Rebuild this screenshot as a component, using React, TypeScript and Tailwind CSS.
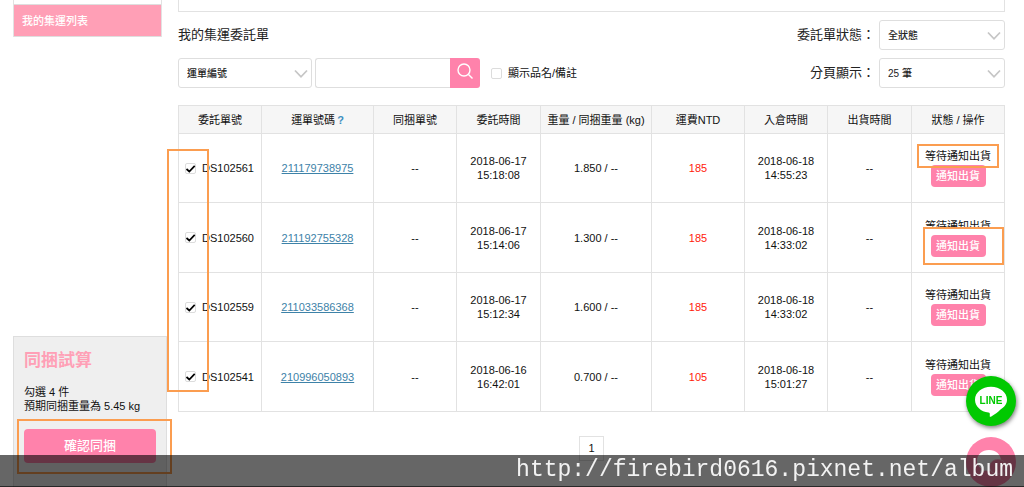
import { useState } from 'react';
import type { ReactNode } from 'react';

interface Order {
  id: string;
  tracking: string;
  created: [string, string];
  weight: string;
  fee: number;
  arrived: [string, string];
  mark?: 'status' | 'button';
}

const ORDERS: Order[] = [
  { id: 'DS102561', tracking: '211179738975', created: ['2018-06-17', '15:18:08'], weight: '1.850', fee: 185, arrived: ['2018-06-18', '14:55:23'], mark: 'status' },
  { id: 'DS102560', tracking: '211192755328', created: ['2018-06-17', '15:14:06'], weight: '1.300', fee: 185, arrived: ['2018-06-18', '14:33:02'], mark: 'button' },
  { id: 'DS102559', tracking: '211033586368', created: ['2018-06-17', '15:12:34'], weight: '1.600', fee: 185, arrived: ['2018-06-18', '14:33:02'] },
  { id: 'DS102541', tracking: '210996050893', created: ['2018-06-16', '16:42:01'], weight: '0.700', fee: 105, arrived: ['2018-06-18', '15:01:27'] },
];

const COLUMNS = [
  { label: '委託單號', width: 'w-[83px]' },
  { label: '運單號碼', width: 'w-[112px]', help: true },
  { label: '同捆單號', width: 'w-[83px]' },
  { label: '委託時間', width: 'w-[84px]' },
  { label: '重量 / 同捆重量 (kg)', width: 'w-[111px]' },
  { label: '運費NTD', width: 'w-[93px]' },
  { label: '入倉時間', width: 'w-[83px]' },
  { label: '出貨時間', width: 'w-[84px]' },
  { label: '狀態 / 操作', width: 'w-[93px]' },
];

function Select({ id, label, width, children }: { id: string; label?: string; width: string; children: ReactNode }) {
  return (
    <div className={`relative ${width}`}>
      <select
        id={id}
        aria-label={label}
        className="block h-[30px] w-full appearance-none rounded-[3px] border border-[#dedede] bg-white pl-2 pr-6 text-[10px] font-medium text-[#222]"
      >
        {children}
      </select>
      <svg className="pointer-events-none absolute right-1 top-2.5 h-3 w-3.5" viewBox="0 0 14 12" fill="none" stroke="#c6c6c6" strokeWidth="1.8">
        <path d="M1 2.500 7 8.800l6-6.300" />
      </svg>
    </div>
  );
}

function CheckBox({ id, label, defaultChecked }: { id: string; label?: string; defaultChecked?: boolean }) {
  const [checked, setChecked] = useState(!!defaultChecked);

  return (
    <span className="relative block h-[11px] w-[11px] shrink-0">
      <input
        id={id}
        aria-label={label}
        type="checkbox"
        checked={checked}
        onChange={(e) => setChecked(e.target.checked)}
        className="block h-[11px] w-[11px] appearance-none rounded-[2px] border border-[#dcdcdc] bg-white"
      />
      {checked && (
        <svg className="pointer-events-none absolute inset-0" viewBox="0 0 11 11" fill="none" stroke="#000" strokeWidth="1.7">
          <path d="M1.500 6 4.300 8.500 9.700 2.800" />
        </svg>
      )}
    </span>
  );
}

function TwoLines({ value }: { value: [string, string] }) {
  return (
    <>
      {value[0]}
      <br />
      {value[1]}
    </>
  );
}

function OrderRow({ order }: { order: Order }) {
  const cell = 'border border-[#e2e2e2] p-0';

  return (
    <tr className="h-[69px] even:h-[70px]">
      <td className={cell}>
        <label className="flex items-center gap-1.5 pl-1.5">
          <CheckBox id={order.id} defaultChecked />
          {order.id}
        </label>
      </td>
      <td className={cell}>
        <a href="#tracking" className="text-[#3d82a8] underline">{order.tracking}</a>
      </td>
      <td className={cell}>--</td>
      <td className={cell}><TwoLines value={order.created} /></td>
      <td className={cell}>{order.weight} / --</td>
      <td className={`${cell} text-[#ff1a0a]`}>{order.fee}</td>
      <td className={cell}><TwoLines value={order.arrived} /></td>
      <td className={cell}>--</td>
      <td className={cell}>
        <div className="flex flex-col items-center gap-0.5">
          <span className="relative">
            等待通知出貨
            {order.mark === 'status' && (
              <span className="absolute -inset-x-2 -inset-y-[5px] z-10 border-2 border-[#fb9d50]" />
            )}
          </span>
          <div className="relative">
            {order.mark === 'button' && (
              <span className="absolute -bottom-2 -left-2 -right-[18px] -top-2 border-2 border-[#fb9d50] bg-white" />
            )}
            <button className="relative block h-[22px] w-[55px] rounded-[4px] bg-[#ff82ab] text-[11px] font-medium text-white">通知出貨</button>
          </div>
        </div>
      </td>
    </tr>
  );
}

function Sidebar() {
  return (
    <aside className="flex w-[154px] shrink-0 flex-col justify-between">
      <nav className="mr-[5px] border-x border-[#e2e2e2] pt-1">
        <a href="#list" className="block h-[33px] border-y border-[#dedede] bg-[#ff9fb6] pl-2 text-[11px] font-medium leading-8 text-white">
          我的集運列表
        </a>
      </nav>

      <section className="h-[151px] border border-b-0 border-[#dedede] bg-[#efefef] px-2.5 pt-3">
        <h2 className="text-[17px] font-bold leading-6 text-[#ff9fb6]">同捆試算</h2>
        <p className="mt-3 text-[11px] leading-[14px]">
          勾選 4 件
          <br />
          預期同捆重量為 5.45 kg
        </p>
        <div className="relative mt-4">
          <button className="block h-[34px] w-full rounded-[4px] bg-[#ff82ab] text-[13px] font-medium text-white">確認同捆</button>
          <span className="pointer-events-none absolute -bottom-[11px] -left-[7px] -right-4 -top-2.5 border-2 border-[#fb9d50]" />
        </div>
      </section>
    </aside>
  );
}

function FloatingButtons() {
  return (
    <div className="fixed bottom-0 right-2 z-20 flex flex-col gap-[11px]">
      <button aria-label="LINE" className="h-[50px] w-[50px] rounded-full bg-[#00c900] shadow-[1px_2px_4px_rgba(0,0,0,0.5)]">
        <svg viewBox="0 0 50 50">
          <path fill="#fff" d="M25 10.800c-9 0-16 5.700-16 12.900 0 6.600 5.900 12 13.500 12.800 1.300.200 1.500 1 1.300 2.700-.2 1.500.200 2 1.500 1.200 3.700-2.200 6.500-4.400 9.200-7 3.900-2.200 6.500-5.600 6.500-9.700 0-7.200-7-12.900-16-12.900z" />
          <text x="25" y="28" textAnchor="middle" fill="#00c900" className="text-[10px] font-bold">LINE</text>
        </svg>
      </button>
      <button aria-label="線上客服" className="h-[50px] w-[50px] rounded-full bg-[#ff82ab]">
        <svg viewBox="0 0 50 50">
          <path fill="#fff" d="M23 13c-7 0-12 4.700-12 10.500 0 3.300 1.600 6.200 4.200 8.100L14 36l5.200-2.500c1.200.300 2.500.500 3.800.500 7 0 12-4.700 12-10.500S30 13 23 13z" />
          <path fill="#ff82ab" stroke="#ffb3cc" strokeWidth="1" d="M32 22.500c-4.800 0-8.300 3.200-8.300 7.300s3.500 7.300 8.300 7.300c.9 0 1.800-.1 2.600-.4l3.600 1.800-.9-3.300c1.800-1.400 2.900-3.200 2.900-5.400 0-4.100-3.500-7.300-8.200-7.300z" />
        </svg>
      </button>
    </div>
  );
}

export default function App() {
  return (
    <div className="relative flex min-h-screen gap-[11px] bg-white pl-[13px] pr-[19px] font-['Liberation_Sans','Noto_Sans_CJK_TC',sans-serif] text-[#111]">
      <Sidebar />

      <main className="min-w-0 flex-1">
        <div className="h-3 border border-t-0 border-[#e2e2e2]" />

        <div className="mt-2 flex items-center justify-between">
          <h1 className="text-[13px] text-[#222]">我的集運委託單</h1>
          <div className="flex items-center gap-1">
            <label htmlFor="status" className="text-[13px] text-[#222]">委託單狀態：</label>
            <Select id="status" width="w-[126px]">
              <option>全狀態</option>
            </Select>
          </div>
        </div>

        <div className="mt-2 flex items-center justify-between">
          <div className="flex items-center">
            <Select id="field" label="搜尋欄位" width="w-[134px]">
              <option>運單編號</option>
            </Select>
            <input aria-label="關鍵字" className="ml-[3px] h-[30px] w-[135px] rounded-l-[3px] border border-r-0 border-[#dedede] px-2 text-[11px]" />
            <button aria-label="搜尋" className="flex h-[30px] w-[30px] items-center justify-center rounded-r-[3px] bg-[#ff82ab]">
              <svg className="mb-1 h-4 w-4" viewBox="0 0 16 16" fill="none" stroke="#fff" strokeWidth="1.400">
                <circle cx="7" cy="7" r="6" />
                <path d="m11.500 11.500 4 4" />
              </svg>
            </button>
            <div className="ml-[11px] flex items-center gap-1.5">
              <CheckBox id="show-note" />
              <label htmlFor="show-note" className="text-[11px]">顯示品名/備註</label>
            </div>
          </div>
          <div className="flex items-center gap-1">
            <label htmlFor="page-size" className="text-[13px] text-[#222]">分頁顯示：</label>
            <Select id="page-size" width="w-[126px]">
              <option>25 筆</option>
            </Select>
          </div>
        </div>

        <div className="relative mt-[17px]">
          <table className="w-full table-fixed border-collapse text-center text-[11px] leading-[14px]">
            <thead>
              <tr className="h-7 bg-[#f6f6f6]">
                {COLUMNS.map(({ label, width, help }) => (
                  <th key={label} className={`${width} whitespace-nowrap border border-[#e2e2e2] p-0 font-normal`}>
                    {label}
                    {help && <a href="#help" className="ml-0.5 font-bold text-[#3d8fc0]">?</a>}
                  </th>
                ))}
              </tr>
            </thead>
            <tbody>
              {ORDERS.map((order) => (
                <OrderRow key={order.id} order={order} />
              ))}
            </tbody>
          </table>
          {/* highlight round the tick boxes */}
          <span className="pointer-events-none absolute -left-[11px] bottom-5 top-11 w-[42px] border-2 border-[#fb9d50]" />
        </div>

        <div className="mt-6 flex justify-center">
          <button className="h-[25px] w-[25px] border border-[#e2e2e2] text-[11px]">1</button>
        </div>
      </main>

      <FloatingButtons />

      <footer className="pointer-events-none fixed inset-x-0 bottom-0 z-30 h-8 border-b border-black/60 bg-black/60 pr-[11px] text-right font-['Liberation_Mono',monospace] text-[23px] leading-[30px] text-[#f2f2f2]">
        http://firebird0616.pixnet.net/album
      </footer>
    </div>
  );
}
